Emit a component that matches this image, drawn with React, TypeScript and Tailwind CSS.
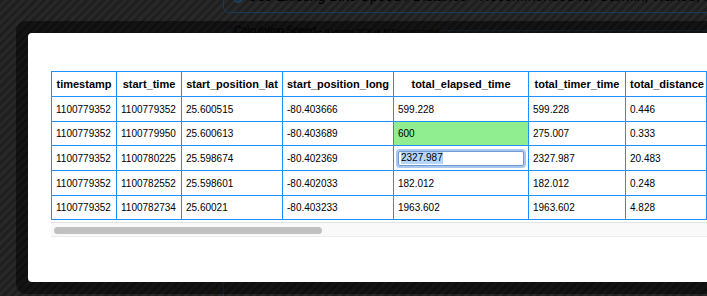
const BORDER = "border-[#1e90ff]"

const COLUMNS: { name: string; width: string }[] = [
  { name: "timestamp", width: "w-[65px]" },
  { name: "start_time", width: "w-[65px]" },
  { name: "start_position_lat", width: "w-[101px]" },
  { name: "start_position_long", width: "w-[111px]" },
  { name: "total_elapsed_time", width: "w-[135px]" },
  { name: "total_timer_time", width: "w-[97px]" },
  { name: "total_distance", width: "w-[81px]" },
  { name: "total_cycles", width: "w-[90px]" },
  { name: "avg_speed", width: "w-[80px]" },
  { name: "max_speed", width: "w-[80px]" },
]

const ROWS: string[][] = [
  ["1100779352", "1100779352", "25.600515", "-80.403666", "599.228", "599.228", "0.446", "", "1.2", "3.1"],
  ["1100779352", "1100779950", "25.600613", "-80.403689", "600", "275.007", "0.333", "", "1.2", "2.8"],
  ["1100779352", "1100780225", "25.598674", "-80.402369", "2327.987", "2327.987", "20.483", "", "8.8", "11.4"],
  ["1100779352", "1100782552", "25.598601", "-80.402033", "182.012", "182.012", "0.248", "", "1.4", "2.9"],
  ["1100779352", "1100782734", "25.60021", "-80.403233", "1963.602", "1963.602", "4.828", "", "2.5", "6.0"],
]

const ROW_H = ["h-[25px]", "h-[24px]", "h-[25px]", "h-[25px]", "h-[24px]"]

// ── Cells ─────────────────────────────────────────────────────────────────

function EditingCell({ value }: { value: string }) {
  return (
    <td className={`border-r border-b ${BORDER} px-[2px] py-0`}>
      <div className="h-[19px] rounded-[4px] bg-[#a8c8f2] p-[2px]">
        <div className="h-full rounded-[2px] border border-[#6f98d2] bg-white flex items-center pl-[2px] text-[10px] leading-none">
          <span className="bg-[#b4d5fc] py-[1px]">{value}</span>
        </div>
      </div>
    </td>
  )
}

function SessionTable() {
  return (
    <table className={`table-fixed w-[906px] border-separate border-spacing-0 border-l border-t ${BORDER} text-black`}>
      <colgroup>
        {COLUMNS.map(c => <col key={c.name} className={c.width} />)}
      </colgroup>
      <thead>
        <tr className="h-[25px]">
          {COLUMNS.map(c => (
            <th key={c.name} className={`border-r border-b ${BORDER} px-[4px] text-[11px] font-bold text-center whitespace-nowrap overflow-hidden`}>
              {c.name}
            </th>
          ))}
        </tr>
      </thead>
      <tbody>
        {ROWS.map((row, r) => (
          <tr key={r} className={ROW_H[r]}>
            {row.map((v, c) => {
              if (r === 2 && c === 4) return <EditingCell key={c} value={v} />
              const changed = r === 1 && c === 4
              return (
                <td
                  key={c}
                  className={`border-r border-b ${BORDER} pl-[4px] pr-[2px] text-[10px] whitespace-nowrap overflow-hidden ${changed ? "bg-[#90ee90]" : ""}`}
                >
                  {v}
                </td>
              )
            })}
          </tr>
        ))}
      </tbody>
    </table>
  )
}

// ── Page ──────────────────────────────────────────────────────────────────

export default function App() {
  return (
    <div className="relative w-[707px] h-[296px] overflow-hidden bg-[repeating-linear-gradient(135deg,#1f1f1f_0px,#1f1f1f_3px,#282828_3px,#282828_6px)] font-['Liberation_Sans',Arial,sans-serif]">

      {/* speed source option */}
      <div className="ml-[223px] -mt-[20px] h-[33px] w-[600px] rounded-[6px] border border-[#1b3a58] flex items-center pl-[10px] gap-[5px] text-[14px] text-black whitespace-nowrap">
        <span className="w-[12px] h-[12px] rounded-full bg-[#15324f] border border-[#244a70]" />
        <span>Use Existing Bike Speed / Distance - Recommended for Garmin, Wahoo, Hammerhead units</span>
      </div>

      <fieldset className="ml-[223px] mt-[9px] w-[600px] h-[300px] rounded-[6px] border border-[#1b3a58]">
        <legend className="ml-[6px] px-[4px] text-black whitespace-nowrap leading-[14px]">
          <span className="text-[10.5px] tracking-[-0.2px]">Calculating Speed</span>
          <span className="text-[10px]"> - </span>
          <span className="text-[8px]">(Garmin TCX or FIT export only)</span>
        </legend>
      </fieldset>

      {/* data editor dialog */}
      <div className="absolute left-[16px] top-[21px] w-[740px] h-[273px] rounded-[10px] bg-black/50 pl-[12px] pt-[12px]">
        <div className="w-[740px] h-[249px] rounded-[4px] bg-white pl-[23px] pt-[38px]">
          <div className="w-[697px] overflow-hidden">
            <SessionTable />
            <div className="mt-[2px] h-[15px] border-t border-b border-t-[#e2e2e2] border-b-[#ececec] bg-[#f9f9f9] pl-[3px] pt-[4px]">
              <div className="w-[268px] h-[7px] rounded-full bg-[#c1c1c1]" />
            </div>
          </div>
        </div>
      </div>
    </div>
  )
}
